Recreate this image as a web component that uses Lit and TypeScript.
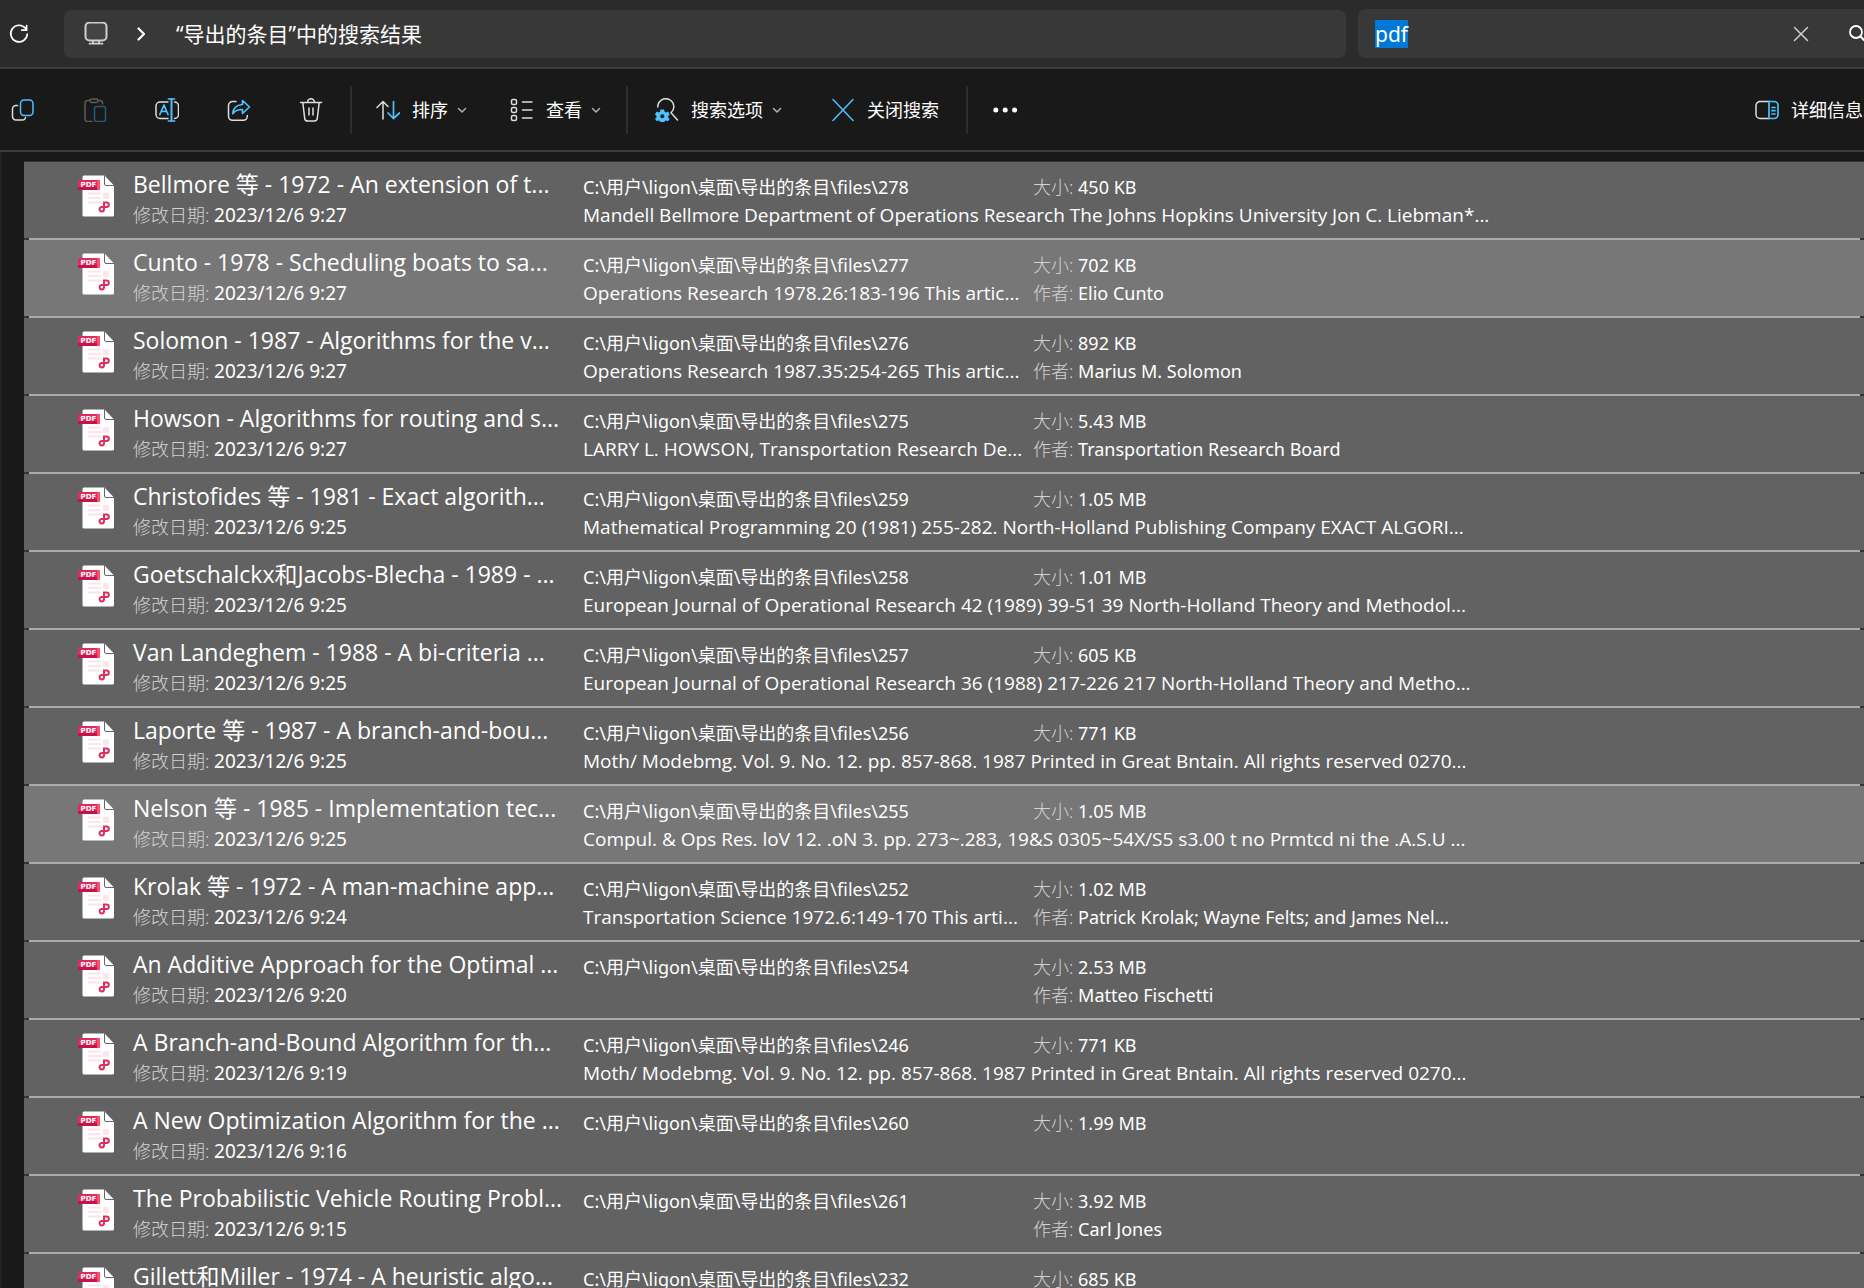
import { LitElement, html, svg, css, nothing } from "lit";
import { customElement, property } from "lit/decorators.js";

interface FileEntry {
  title: string;
  date: string;
  folder: string;
  size: string;
  summary?: string;
  author?: string;
  active?: boolean;
}

const FILES: FileEntry[] = [
  { title: "Bellmore 等 - 1972 - An extension of t...", date: "2023/12/6 9:27", folder: "278", size: "450 KB", summary: "Mandell Bellmore Department of Operations Research The Johns Hopkins University Jon C. Liebman*..." },
  { title: "Cunto - 1978 - Scheduling boats to sa...", date: "2023/12/6 9:27", folder: "277", size: "702 KB", summary: "Operations Research 1978.26:183-196 This artic...", author: "Elio Cunto", active: true },
  { title: "Solomon - 1987 - Algorithms for the v...", date: "2023/12/6 9:27", folder: "276", size: "892 KB", summary: "Operations Research 1987.35:254-265 This artic...", author: "Marius M. Solomon" },
  { title: "Howson - Algorithms for routing and s...", date: "2023/12/6 9:27", folder: "275", size: "5.43 MB", summary: "LARRY L. HOWSON, Transportation Research De...", author: "Transportation Research Board" },
  { title: "Christofides 等 - 1981 - Exact algorith...", date: "2023/12/6 9:25", folder: "259", size: "1.05 MB", summary: "Mathematical Programming 20 (1981) 255-282. North-Holland Publishing Company EXACT ALGORI..." },
  { title: "Goetschalckx和Jacobs-Blecha - 1989 - ...", date: "2023/12/6 9:25", folder: "258", size: "1.01 MB", summary: "European Journal of Operational Research 42 (1989) 39-51 39 North-Holland Theory and Methodol..." },
  { title: "Van Landeghem - 1988 - A bi-criteria ...", date: "2023/12/6 9:25", folder: "257", size: "605 KB", summary: "European Journal of Operational Research 36 (1988) 217-226 217 North-Holland Theory and Metho..." },
  { title: "Laporte 等 - 1987 - A branch-and-bou...", date: "2023/12/6 9:25", folder: "256", size: "771 KB", summary: "Moth/ Modebmg. Vol. 9. No. 12. pp. 857-868. 1987 Printed in Great Bntain. All rights reserved 0270..." },
  { title: "Nelson 等 - 1985 - Implementation tec...", date: "2023/12/6 9:25", folder: "255", size: "1.05 MB", summary: "Compul. & Ops Res. loV 12. .oN 3. pp. 273~.283, 19&S 0305~54X/S5 s3.00 t no Prmtcd ni the .A.S.U ...", active: true },
  { title: "Krolak 等 - 1972 - A man-machine app...", date: "2023/12/6 9:24", folder: "252", size: "1.02 MB", summary: "Transportation Science 1972.6:149-170 This arti...", author: "Patrick Krolak; Wayne Felts; and James Nel..." },
  { title: "An Additive Approach for the Optimal ...", date: "2023/12/6 9:20", folder: "254", size: "2.53 MB", author: "Matteo Fischetti" },
  { title: "A Branch-and-Bound Algorithm for th...", date: "2023/12/6 9:19", folder: "246", size: "771 KB", summary: "Moth/ Modebmg. Vol. 9. No. 12. pp. 857-868. 1987 Printed in Great Bntain. All rights reserved 0270..." },
  { title: "A New Optimization Algorithm for the ...", date: "2023/12/6 9:16", folder: "260", size: "1.99 MB" },
  { title: "The Probabilistic Vehicle Routing Probl...", date: "2023/12/6 9:15", folder: "261", size: "3.92 MB", author: "Carl Jones" },
  { title: "Gillett和Miller - 1974 - A heuristic algo...", date: "", folder: "232", size: "685 KB" },
];

const icon = (body: unknown, size = 24) => html`<svg
  width=${size} height=${size} viewBox="0 0 ${size} ${size}" fill="none"
  stroke="#dedede" stroke-width="1.5" stroke-linecap="round" stroke-linejoin="round" aria-hidden="true">${body}</svg>`;

const ICONS = {
  refresh: svg`<path stroke="#fff" stroke-width="1.7" d="M18.6 6.5A8.3 8.3 0 1 0 20.3 12M19.6 3.6v4.6h-4.8"/>`,
  monitor: svg`<rect x="1.500" y="0.500" width="21" height="18" rx="4" stroke="#cfcfcf" stroke-width="2" fill="#444"/><path stroke="#cfcfcf" stroke-width="1.8" d="M9 19v2.4M15 19v2.4M5.500 21.600h13"/>`,
  crumb: svg`<path stroke="#fff" stroke-width="2.2" d="M9.5 6.5 15 12l-5.500 5.500"/>`,
  copy: svg`<path d="M6.500 7.500H5a3.500 3.500 0 0 0-3.500 3.500v7.500A3.500 3.500 0 0 0 5 22h6.500a3 3 0 0 0 3-2.500"/><rect x="9.500" y="2" width="12.500" height="15.500" rx="3.500" stroke="#4cc2ff"/>`,
  paste: svg`<g stroke="#5c5c5c"><path d="M7 2.500H4.500A2.500 2.500 0 0 0 2 5v16a2.500 2.500 0 0 0 2.500 2.500H9M15.500 2.500H17A2.500 2.500 0 0 1 19.500 5v1"/><rect x="7" y="1" width="8" height="3.500" rx="1.700"/></g><rect x="11.500" y="8.500" width="11" height="15" rx="2" stroke="#275a74"/>`,
  rename: svg`<path d="M13 4H5a4 4 0 0 0-4 4v8.500a4 4 0 0 0 4 4h8M19.500 4A4 4 0 0 1 23.500 8v8.500a4 4 0 0 1-4 4"/><g stroke="#4cc2ff"><path stroke-width="1.700" d="M4.800 16.500 9 7l4 9.500M6.300 13.300h5.200"/><path stroke-width="2" d="M16.500 1.500v21"/><path d="M13.300 1h6.400M13.300 23h6.400"/></g>`,
  share: svg`<path d="M9 3.500H5.500A4 4 0 0 0 1.500 7.500v10.800a4 4 0 0 0 4 4h10.800a4 4 0 0 0 4-4V17.500"/><path stroke="#4cc2ff" stroke-width="1.700" d="M15.500 2.500 22.500 9l-7 6.500v-4c-4.500-.2-7.500 1-9.700 4.200.2-5.700 3.700-8.700 9.700-9.200z"/>`,
  trash: svg`<path d="M1.500 4.500h21M3.800 4.500l1.900 15.800a3 3 0 0 0 3 2.700h6.600a3 3 0 0 0 3-2.700L20.200 4.500M8.500 4.200a3.500 3.500 0 0 1 7 0M10 10v7M14 10v7"/>`,
  sort: svg`<path d="M7 21V3.500M1 9.500l6-6 5 5"/><path stroke="#4cc2ff" stroke-width="1.700" d="M17.500 3.500V20.500M12 15l5.500 5.500L23.500 15"/>`,
  view: svg`<rect x="1.500" y="1.500" width="5" height="5" rx="1.500"/><rect x="1.500" y="9.500" width="5" height="5" rx="1.500"/><rect x="1.500" y="17.500" width="5" height="5" rx="1.500"/><path d="M12.500 4h9.500M12.500 12h9.500M12.500 20h9.500"/>`,
  options: svg`<path d="M2.800 9A8 8 0 1 1 16 14.800L22.500 22"/><g stroke="none" fill="#4cc2ff"><path d="M5.500 11.500h3.600l.5 2.200 1.400.7 2-.8 1.700 3-1.500 1.400v1.400l1.500 1.400-1.700 2.400-2-.6-1.400.700-.5 2H5.500L5 23.200l-1.400-.7-2 .6L0 20.700l1.500-1.400v-1.400L0 16.500l1.600-2.900 2 .8L5 13.700z"/><circle cx="7.300" cy="18.300" r="2" fill="#191919"/></g>`,
  close: svg`<path stroke="#4cc2ff" d="M2 1.500 22 22.500M22 1.500 2 22.500"/>`,
  more: svg`<g fill="#fff" stroke="none"><circle cx="2.800" cy="12" r="2.500"/><circle cx="12.200" cy="12" r="2.500"/><circle cx="21.600" cy="12" r="2.500"/></g>`,
  details: svg`<path d="M14 3.500H5A4 4 0 0 0 1 7.500v9a4 4 0 0 0 4 4h9"/><path stroke="#4cc2ff" stroke-width="1.700" d="M14 3.500h5A4 4 0 0 1 23 7.500v9a4 4 0 0 1-4 4H14zM17 9.500h3M17 12.700h3M17 16h3"/>`,
  clear: svg`<path stroke="#d0d0d0" stroke-width="1.500" d="M5.500 5.500l13 13M18.500 5.500l-13 13"/>`,
  find: svg`<circle cx="9" cy="10" r="6" stroke="#fff" stroke-width="1.800"/><path stroke="#fff" stroke-width="2" d="M13.500 14.500 19 20"/>`,
  chevron: svg`<path stroke="#b0b0b0" stroke-width="1.500" d="M2.500 4.500 6 8l3.500-3.500"/>`,
};

@customElement("pdf-icon")
export class PdfIcon extends LitElement {
  static styles = css`
    :host { display: block; width: 36px; height: 42px; }
    .sheet { display: block; }
    .tag { font: 700 7px "DejaVu Sans", sans-serif; fill: #fff; }
  `;
  render() {
    return html`<svg class="sheet" width="36" height="42" viewBox="0 0 36 42" aria-hidden="true">
      <path d="M6 .5h20.500L36 10.500V40a1.500 1.500 0 0 1-1.500 1.500H6A1.500 1.500 0 0 1 4.500 40V2A1.500 1.500 0 0 1 6 .5z" fill="#fff"/>
      <path d="M26.500.5V9a1.500 1.500 0 0 0 1.500 1.500h8" fill="none" stroke="#666" stroke-width="1"/>
      <path d="M10 18.500h13M10 23h13M10 27.500h13" stroke="#fde4ea" stroke-width="2"/>
      <rect x="25" y="18" width="6" height="6" rx="1" fill="#fde4ea"/>
      <rect x="0" y="5" width="22" height="10" rx="1" fill="#de2c5c"/>
      <path d="M0 12h19v3H1a1 1 0 0 1-1-1z" fill="#c3134a"/>
      <path d="M19 5h2a1 1 0 0 1 1 1v8a1 1 0 0 1-1 1h-2z" fill="#ff4d6d"/>
      <text class="tag" x="2.500" y="12">PDF</text>
      <path d="M26 27.500h2.500a2.300 2.300 0 0 1 0 4.600H23.200a2.200 2.200 0 1 0 2.800 2.300z" fill="none" stroke="#de2c5c" stroke-width="2"/>
    </svg>`;
  }
}

@customElement("file-row")
export class FileRow extends LitElement {
  @property({ attribute: false }) file!: FileEntry;

  static styles = css`
    :host { display: block; }
    .row {
      display: flex;
      height: 76px;
      padding-left: 54px;
      background: #626262;
      color: #fff;
    }
    .row.active { background: #777; }
    .thumb { flex: none; margin: 13px 19px 0 0; }
    .cells {
      flex: 1;
      min-width: 0;
      display: grid;
      grid-template-columns: 450px 450px minmax(0, 1fr);
      grid-template-rows: 28px 28px;
      padding-top: 10px;
      font-size: 18px;
      line-height: 30px;
      white-space: pre;
    }
    .title, .summary { font-family: "Open Sans", "Noto Sans CJK SC", sans-serif; }
    .title { margin: 0; font-size: 23px; font-weight: 400; line-height: 24px; }
    .date { grid-area: 2 / 1; }
    .path { grid-area: 1 / 2; }
    .size { grid-area: 1 / 3; }
    .summary { grid-area: 2 / 2; font-size: 19px; }
    .author { grid-area: 2 / 3; }
    .label { color: #d2d2d2; font-weight: 300; }
    .value { font-size: 19px; }
  `;

  render() {
    const f = this.file;
    return html`<article class="row ${f.active ? "active" : ""}">
      <pdf-icon class="thumb"></pdf-icon>
      <div class="cells">
        <h2 class="title">${f.title}</h2>
        ${f.date ? html`<span class="date"><span class="label">修改日期: </span><span class="value">${f.date}</span></span>` : nothing}
        <span class="path">C:\\用户\\ligon\\桌面\\导出的条目\\files\\${f.folder}</span>
        <span class="size"><span class="label">大小: </span>${f.size}</span>
        ${f.summary ? html`<span class="summary">${f.summary}</span>` : nothing}
        ${f.author ? html`<span class="author"><span class="label">作者: </span>${f.author}</span>` : nothing}
      </div>
    </article>`;
  }
}

@customElement("app-root")
export class AppRoot extends LitElement {
  static styles = css`
    :host {
      display: flex;
      flex-direction: column;
      height: 100vh;
      overflow: hidden;
      background: #191919;
      color: #fff;
      font-family: "Noto Sans", "Noto Sans CJK SC", sans-serif;
      font-size: 18px;
    }
    svg { display: block; flex: none; }
    button {
      display: flex;
      align-items: center;
      flex: none;
      margin: 0;
      padding: 0;
      border: 0;
      background: none;
      color: inherit;
      font: inherit;
      line-height: 24px;
      white-space: nowrap;
    }
    .nav {
      display: flex;
      flex: none;
      align-items: center;
      height: 67px;
      padding-left: 7px;
      background: #2b2b2b;
      border-bottom: 2px solid #3b3b3b;
    }
    .address {
      display: flex;
      align-items: center;
      flex: 1;
      min-width: 0;
      height: 48px;
      margin: 0 12px 0 33px;
      padding-left: 20px;
      border-radius: 7px;
      background: #383838;
      font-size: 21px;
      line-height: 30px;
      white-space: nowrap;
    }
    .crumb { margin: 0 23px 0 21px; }
    .search {
      display: flex;
      align-items: center;
      flex: none;
      width: 526px;
      height: 49px;
      margin-right: -20px;
      border-radius: 7px;
      background: #383838;
    }
    .query {
      flex: 1;
      min-width: 0;
      margin: 0;
      padding: 0 0 0 17px;
      border: 0;
      outline: 0;
      background: none;
      color: #fff;
      font: inherit;
      font-size: 21px;
      line-height: 28px;
      caret-color: transparent;
    }
    .query::selection { background: #0078d7; color: #fff; }
    .clear { margin-right: 34px; }
    .find { margin-right: 13px; }
    .tools {
      display: flex;
      flex: none;
      align-items: center;
      height: 81px;
      padding-left: 11px;
      border-bottom: 2px solid #3b3b3b;
    }
    .actions { display: flex; gap: 48px; }
    .sep { flex: none; width: 2px; height: 48px; background: #2d2d2d; }
    .text { margin-left: 12px; }
    .chev { margin-left: 8px; }
    .actions + .sep { margin: 0 24px 0 27px; }
    .group { display: flex; align-items: center; gap: 48px; }
    .view { gap: 42px; }
    .view + .sep { margin: 0 27px 0 24px; }
    .group:not(.view) + .sep { margin: 0 25px 0 27px; }
    .details { margin: 0 1px 0 auto; }
    .results {
      flex: 1;
      min-height: 0;
      overflow: hidden;
      padding: 9px 0 0 22px;
      border-left: 2px solid #202020;
    }
    .list {
      margin: 0;
      padding: 0;
      list-style: none;
      border-top: 1px solid #333;
    }
    .item { background: #333; }
    .item::after {
      content: "";
      display: block;
      height: 2px;
      margin: 0 4px 0 5px;
      background: #ababab;
    }
  `;

  firstUpdated() {
    const box = this.renderRoot.querySelector<HTMLInputElement>(".query");
    box?.focus();
    box?.select();
  }

  render() {
    const chev = html`<span class="chev">${icon(ICONS.chevron, 12)}</span>`;
    return html`
      <header class="nav">
        <button aria-label="刷新">${icon(ICONS.refresh)}</button>
        <nav class="address">
          ${icon(ICONS.monitor)}
          <span class="crumb">${icon(ICONS.crumb)}</span>
          <span>“导出的条目”中的搜索结果</span>
        </nav>
        <div class="search" role="search">
          <input class="query" type="text" aria-label="搜索" .value=${"pdf"} />
          <button class="clear" aria-label="清除">${icon(ICONS.clear)}</button>
          <button class="find" aria-label="开始搜索">${icon(ICONS.find)}</button>
        </div>
      </header>
      <div class="tools" role="toolbar">
        <div class="actions">
          <button aria-label="复制">${icon(ICONS.copy)}</button>
          <button aria-label="粘贴" disabled>${icon(ICONS.paste)}</button>
          <button aria-label="重命名">${icon(ICONS.rename)}</button>
          <button aria-label="共享">${icon(ICONS.share)}</button>
          <button aria-label="删除">${icon(ICONS.trash)}</button>
        </div>
        <span class="sep"></span>
        <div class="group view">
          <button>${icon(ICONS.sort)}<span class="text">排序</span>${chev}</button>
          <button>${icon(ICONS.view)}<span class="text">查看</span>${chev}</button>
        </div>
        <span class="sep"></span>
        <div class="group">
          <button>${icon(ICONS.options)}<span class="text">搜索选项</span>${chev}</button>
          <button>${icon(ICONS.close)}<span class="text">关闭搜索</span></button>
        </div>
        <span class="sep"></span>
        <button aria-label="更多">${icon(ICONS.more)}</button>
        <button class="details">${icon(ICONS.details)}<span class="text">详细信息</span></button>
      </div>
      <main class="results">
        <ul class="list">
          ${FILES.map((f) => html`<li class="item"><file-row .file=${f}></file-row></li>`)}
        </ul>
      </main>
    `;
  }
}
